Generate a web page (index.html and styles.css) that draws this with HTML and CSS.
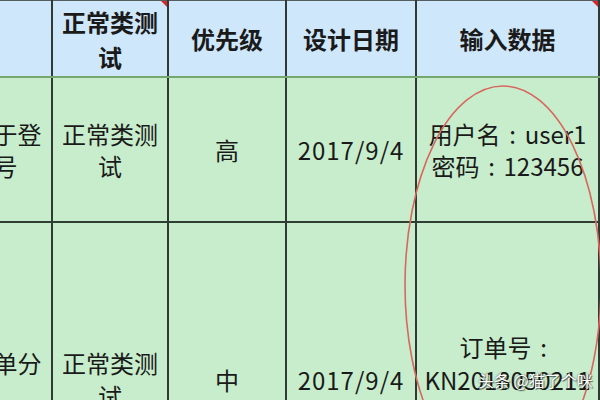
FILE: index.html
```html
<!DOCTYPE html>
<html lang="zh">
<head>
<meta charset="utf-8">
<link rel="stylesheet" href="styles.css">
</head>
<body>
<div class="sheet">
  <table class="grid">
    <colgroup>
      <col class="c1"><col class="c2"><col class="c3"><col class="c4"><col class="c5"><col class="c6">
    </colgroup>
    <thead>
      <tr class="head">
        <th></th>
        <th class="note">正常类测试</th>
        <th>优先级</th>
        <th>设计日期</th>
        <th class="note">输入数据</th>
        <th></th>
      </tr>
    </thead>
    <tbody>
      <tr class="r1">
        <td class="first">可用于登<br>录号</td>
        <td>正常类测试</td>
        <td>高</td>
        <td class="date">2017/9/4</td>
        <td class="data">用户名<span class="colon">:</span>user1<br>密码<span class="colon">:</span>123456</td>
        <td></td>
      </tr>
      <tr class="r2">
        <td class="first">查订单分<br>&nbsp;</td>
        <td>正常类测试</td>
        <td>中</td>
        <td class="date">2017/9/4</td>
        <td class="data">订单号<span class="colon">:</span><br>KN2018050211<br>22</td>
        <td></td>
      </tr>
    </tbody>
  </table>
  <svg class="circle" width="220" height="330" viewBox="0 0 220 330">
    <ellipse cx="99" cy="201" rx="98" ry="199" fill="none" stroke="#d8675f" stroke-width="1.6"/>
  </svg>
  <div class="mark">头条 @猫了个咪</div>
</div>
</body>
</html>
```

FILE: styles.css
```css
html, body {
  margin: 0;
  padding: 0;
  background: #c8edcc;
}
body {
  width: 600px;
  height: 400px;
  overflow: hidden;
  font-family: "Noto Sans CJK SC", "Noto Sans", sans-serif;
  color: #1a1a1a;
}
.sheet {
  position: relative;
  width: 600px;
  height: 400px;
  overflow: hidden;
}
.grid {
  border-collapse: collapse;
  table-layout: fixed;
  margin-left: -66px;
  margin-top: -1px;
  width: 780px;
}
.c1 { width: 117px; }
.c2 { width: 116px; }
.c3 { width: 118px; }
.c4 { width: 130px; }
.c5 { width: 183px; }
.c6 { width: 116px; }
.grid th, .grid td {
  border-left: 2px solid #2e3a33;
  border-right: 2px solid #2e3a33;
  text-align: center;
  vertical-align: middle;
  font-size: 24px;
  padding: 0 2px;
  overflow: hidden;
  white-space: normal;
}
.head th {
  background: #cfe7fa;
  height: 75px;
  font-weight: 700;
  line-height: 35px;
  border-top: 2px solid #555d60;
  border-bottom: 2px solid #74a66e;
  position: relative;
}
.head th.note::after {
  content: "";
  position: absolute;
  right: -2px;
  top: 0;
  border-top: 8px solid #d9262a;
  border-left: 8px solid transparent;
}
.r1 td {
  background: #c8edcc;
  height: 143px;
  line-height: 32px;
  border-bottom: 2px solid #2e3e33;
}
.r2 td {
  background: #c8edcc;
  height: 312px;
  line-height: 33px;
}
.grid td.first {
  white-space: nowrap;
  text-overflow: clip;
}
.date {
  letter-spacing: 1px;
}
.data {
  white-space: nowrap;
}
.colon {
  display: inline-block;
  width: 24px;
  text-align: center;
}
.circle {
  position: absolute;
  left: 404px;
  top: 84px;
}
.mark {
  position: absolute;
  left: 478px;
  top: 368px;
  font-size: 16px;
  line-height: 24px;
  color: #ffffff;
  text-shadow: 0 0 2px rgba(0,0,0,0.7), 1px 1px 1px rgba(0,0,0,0.5);
  white-space: nowrap;
}
```
